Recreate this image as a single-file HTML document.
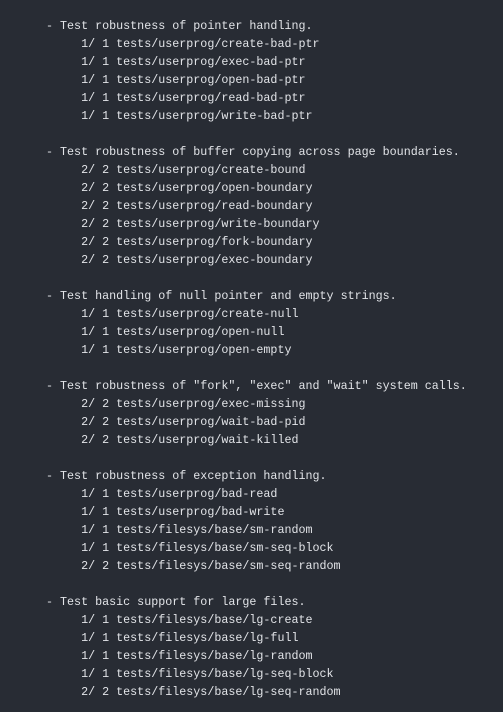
<!DOCTYPE html>
<html><head><style>
html,body{margin:0;padding:0;background:#282c34;width:503px;height:712px;overflow:hidden}
pre{margin:0;position:absolute;left:46px;top:17px;font-family:"Liberation Mono",monospace;font-size:11.7px;line-height:18px;color:#e2e4e8}
</style></head><body><pre>- Test robustness of pointer handling.
     1/ 1 tests/userprog/create-bad-ptr
     1/ 1 tests/userprog/exec-bad-ptr
     1/ 1 tests/userprog/open-bad-ptr
     1/ 1 tests/userprog/read-bad-ptr
     1/ 1 tests/userprog/write-bad-ptr

- Test robustness of buffer copying across page boundaries.
     2/ 2 tests/userprog/create-bound
     2/ 2 tests/userprog/open-boundary
     2/ 2 tests/userprog/read-boundary
     2/ 2 tests/userprog/write-boundary
     2/ 2 tests/userprog/fork-boundary
     2/ 2 tests/userprog/exec-boundary

- Test handling of null pointer and empty strings.
     1/ 1 tests/userprog/create-null
     1/ 1 tests/userprog/open-null
     1/ 1 tests/userprog/open-empty

- Test robustness of "fork", "exec" and "wait" system calls.
     2/ 2 tests/userprog/exec-missing
     2/ 2 tests/userprog/wait-bad-pid
     2/ 2 tests/userprog/wait-killed

- Test robustness of exception handling.
     1/ 1 tests/userprog/bad-read
     1/ 1 tests/userprog/bad-write
     1/ 1 tests/filesys/base/sm-random
     1/ 1 tests/filesys/base/sm-seq-block
     2/ 2 tests/filesys/base/sm-seq-random

- Test basic support for large files.
     1/ 1 tests/filesys/base/lg-create
     1/ 1 tests/filesys/base/lg-full
     1/ 1 tests/filesys/base/lg-random
     1/ 1 tests/filesys/base/lg-seq-block
     2/ 2 tests/filesys/base/lg-seq-random</pre></body></html>
